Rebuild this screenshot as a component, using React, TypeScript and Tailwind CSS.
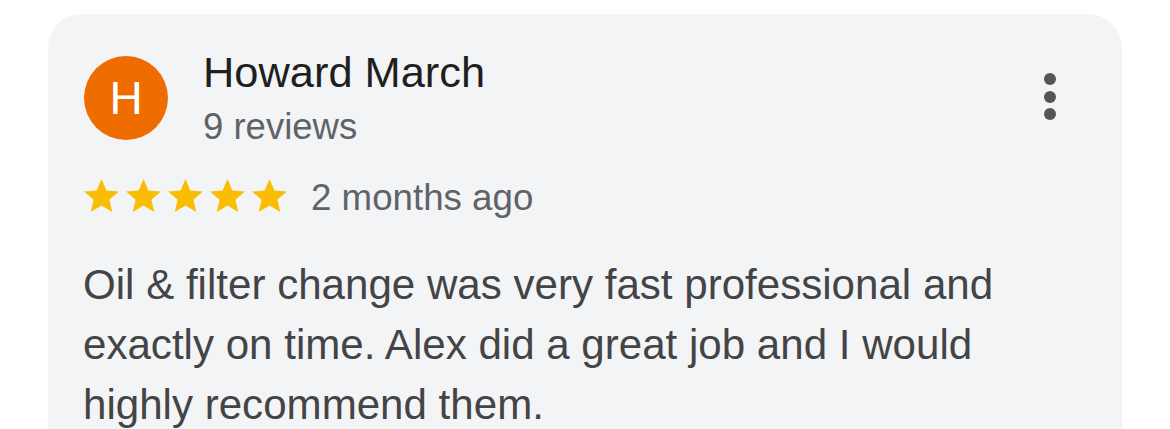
import React from "react";

function Star() {
  return (
    <svg width="35" height="33" viewBox="2 2 20 19" className="block shrink-0">
      <path
        d="M12 17.27L18.18 21l-1.64-7.03L22 9.24l-7.19-.61L12 2 9.19 8.63 2 9.24l5.46 4.73L5.82 21z"
        fill="#fbbc04"
      />
    </svg>
  );
}

export default function App() {
  return (
    <div
      className="w-[1170px] h-[429px] bg-white overflow-hidden pt-[14px] pl-[48px] pr-[48px]"
      style={{ fontFamily: "'Liberation Sans', Arial, sans-serif" }}
    >
      <div className="bg-[#f3f4f6] rounded-[34px] h-[460px] pl-[36px] pr-[66px] pt-[37px]">
        <div className="flex items-start">
          <div className="w-[84px] h-[84px] mt-[5px] rounded-full bg-[#ef6c00] flex items-center justify-center text-white text-[46px] leading-none shrink-0">
            H
          </div>
          <div className="ml-[35px] flex-1">
            <div className="text-[43.4px] leading-[42px] text-[#1f1f1f]">Howard March</div>
            <div className="text-[36.5px] leading-[36px] text-[#5f6368] mt-[16px]">9 reviews</div>
          </div>
          <div className="flex flex-col gap-[5.5px] mt-[22px]">
            <div className="w-[12px] h-[12px] rounded-full bg-[#555555]" />
            <div className="w-[12px] h-[12px] rounded-full bg-[#555555]" />
            <div className="w-[12px] h-[12px] rounded-full bg-[#555555]" />
          </div>
        </div>
        <div className="flex items-start mt-[34px]">
          <div className="flex gap-[7px]">
            <Star />
            <Star />
            <Star />
            <Star />
            <Star />
          </div>
          <span className="ml-[24px] mt-[1px] text-[36.7px] text-[#5f6368] leading-[36px]">2 months ago</span>
        </div>
        <div className="mt-[39px] -ml-[1px] text-[42.1px] leading-[60px] text-[#444446] max-w-[960px]">
          Oil &amp; filter change was very fast professional and exactly on time. Alex did a great job and I would highly recommend them.
        </div>
      </div>
    </div>
  );
}
